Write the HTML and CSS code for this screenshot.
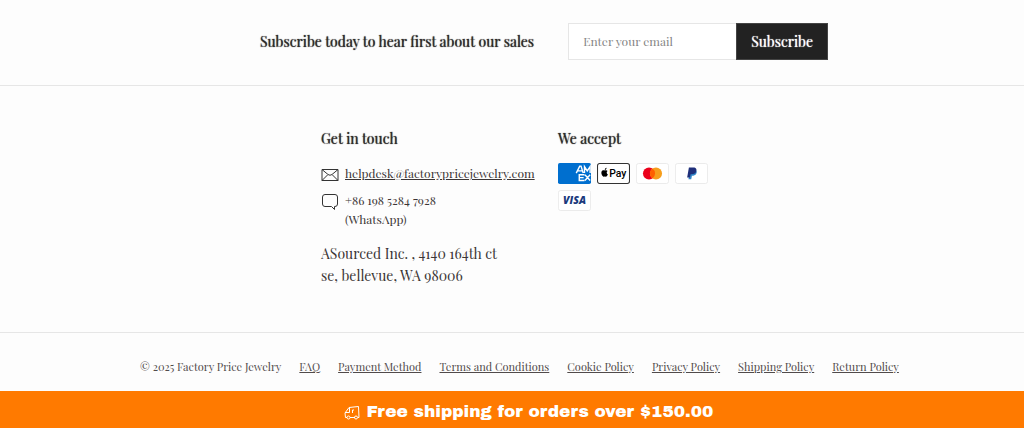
FILE: index.html
```html
<!DOCTYPE html>
<html lang="en">
<head>
  <meta charset="UTF-8">
  <meta name="viewport" content="width=device-width, initial-scale=1.0">
  <title>Factory Price Jewelry</title>
  <link rel="stylesheet" href="styles.css">
</head>
<body>
  <section class="newsletter">
    <h2 class="newsletter-title"><label for="email">Subscribe today to hear first about our sales</label></h2>
    <form class="newsletter-form">
      <input class="newsletter-input" type="email" id="email" placeholder="Enter your email">
      <button class="newsletter-button" type="submit">Subscribe</button>
    </form>
  </section>

  <footer>
    <div class="footer-columns">
      <div class="contact">
        <h3>Get in touch</h3>
        <div class="contact-row">
          <svg class="contact-icon" viewBox="0 0 18 18">
            <path d="M1 3.500h16v11H1zM1 3.500l6 5q2 1.500 4 0l6-5M1 14.500l5.500-5.500M17 14.500l-5.500-5.500"/>
          </svg>
          <a class="email-link" href="mailto:helpdesk@factorypricejewelry.com">helpdesk@factorypricejewelry.com</a>
        </div>
        <div class="contact-row">
          <svg class="contact-icon" viewBox="0 0 18 18">
            <path d="M4 1.500h10q2.500 0 2.500 2.500v7q0 2.500-2.500 2.500h-.5v3l-3-3H4q-2.500 0-2.500-2.500V4Q1.500 1.500 4 1.500z"/>
          </svg>
          <span>+86 198 5284 7928<br>(WhatsApp)</span>
        </div>
        <p class="address">ASourced Inc. , 4140 164th ct<br>se, bellevue, WA 98006</p>
      </div>

      <div class="payments">
        <h3>We accept</h3>
        <div class="cards">
          <svg class="card" viewBox="0 0 38 24" role="img" aria-label="American Express">
            <rect width="38" height="24" rx="2" fill="#006fcf"/>
            <g fill="none" stroke="#fff" stroke-width="1.600">
              <path d="M21 11.500l4-8h1.500l2.500 8M23 9h5M30.500 11.500V4l3.200 5L37 4v7.500"/>
              <path d="M30.500 13.500H24.500v6.500h6M24.500 16.800h5M31 13.500l6 6.500M37 13.500l-6 6.500"/>
            </g>
          </svg>
          <svg class="card" viewBox="0 0 38 24" role="img" aria-label="Apple Pay">
            <rect x=".6" y=".6" width="36.800" height="22.800" rx="2.500" fill="#fff" stroke="#333" stroke-width="1.200"/>
            <path d="M9.200 8.500c1-.5 2.200-.4 3 .6-1.500 1-1.300 3.200.3 3.900-.6 1.600-1.500 2.900-2.500 2.700-.7-.3-1.200-.3-1.900 0C6.200 16.200 4.500 12 5.200 10.100c.6-1.700 2.100-2.100 4-1.600zM9 8c0-1.400.8-2.300 2-2.500.1 1.400-.8 2.400-2 2.500z"/>
            <text class="apple-text" x="14" y="16">Pay</text>
          </svg>
          <svg class="card" viewBox="0 0 38 24" role="img" aria-label="Mastercard">
            <rect class="card-frame" x=".5" y=".5" width="37" height="23" rx="2.500"/>
            <circle cx="15" cy="12" r="7" fill="#eb001b"/>
            <circle cx="23" cy="12" r="7" fill="#f79e1b"/>
            <path d="M19 6.300a7 7 0 0 1 0 11.400 7 7 0 0 1 0-11.400z" fill="#ff5f00"/>
          </svg>
          <svg class="card" viewBox="0 0 38 24" role="img" aria-label="PayPal">
            <rect class="card-frame" x=".5" y=".5" width="37" height="23" rx="2.500"/>
            <path d="M17.500 8h6c2.500.8 2 6-2.500 6.500h-1.500l-.8 4h-3.200z" fill="#3086c8"/>
            <path d="M16 5h5c3.500 0 4.200 2 3.500 4.500-.7 2.500-2.500 3.500-5.500 3.500h-1l-.8 3.500H14z" fill="#1f2f7a"/>
          </svg>
          <svg class="card" viewBox="0 0 38 24" role="img" aria-label="Visa">
            <rect class="card-frame" x=".5" y=".5" width="37" height="23" rx="2.500"/>
            <text class="visa-text" x="19" y="16" text-anchor="middle">VISA</text>
          </svg>
        </div>
      </div>
    </div>

    <nav class="footer-links">
      <span>© 2025 Factory Price Jewelry</span>
      <a href="#">FAQ</a>
      <a href="#">Payment Method</a>
      <a href="#">Terms and Conditions</a>
      <a href="#">Cookie Policy</a>
      <a href="#">Privacy Policy</a>
      <a href="#">Shipping Policy</a>
      <a href="#">Return Policy</a>
    </nav>
  </footer>

  <div class="shipping-bar">
    <svg class="shipping-icon" viewBox="0 0 16 16">
      <path d="M3 13.500H1.500L1 9l4-5.500 9.500-1 .5 11h-1M6 13.500h5M5.500 4v4.500H1M8.500 9V6H10"/>
      <circle cx="4.500" cy="13.500" r="1.500"/>
      <circle cx="12" cy="13.500" r="1.500"/>
    </svg>
    <span>Free shipping for orders over $150.00</span>
  </div>
</body>
</html>
```

FILE: styles.css
```css
body {
  margin: 0;
  background-color: #fdfdfd;
  color: #3b3535;
  font-family: "Playfair Display", "Liberation Serif", serif;
  font-size: 12px;
  line-height: 19px;
}

h2, h3 {
  margin: 0;
  color: #2d2a2a;
  font-size: 14px;
  font-weight: 400;
  line-height: 20px;
  text-shadow: 0 0 1px #2d2a2a;
}

a {
  color: inherit;
}

.newsletter {
  display: flex;
  justify-content: center;
  align-items: center;
  gap: 34px;
  padding: 23px 0 25px 64px;
  border-bottom: 1px solid #e6e6e6;
}

.newsletter-form {
  display: flex;
}

.newsletter-input {
  box-sizing: border-box;
  width: 168px;
  height: 37px;
  padding: 0 14px 2px;
  border: 1px solid #e6e6e6;
  border-right: none;
  border-radius: 0;
  background: white;
  font-family: inherit;
  font-size: 12px;
}

.newsletter-input::placeholder {
  color: #858585;
}

.newsletter-button {
  padding: 0 14px;
  border: 1px solid #444;
  background-color: #222;
  color: white;
  font-family: inherit;
  font-size: 14px;
  text-shadow: 0 0 1px white;
  cursor: pointer;
}

.footer-columns {
  display: grid;
  grid-template-columns: 213px 213px;
  justify-content: center;
  gap: 24px;
  padding: 43px 0 45px 68px;
}

.contact-row {
  display: flex;
  gap: 6px;
  margin-top: 7px;
}

h3 + .contact-row {
  margin-top: 15px;
}

.contact-icon {
  flex: none;
  width: 18px;
  height: 18px;
  margin-top: 2px;
  fill: none;
  stroke: #333;
  stroke-width: 1;
}

.address {
  margin: 14px 0 0;
  font-size: 14px;
  line-height: 22px;
}

.cards {
  display: flex;
  flex-wrap: wrap;
  gap: 6px;
  width: 160px;
  margin-top: 14px;
}

.card {
  width: 33px;
  height: 21px;
}

.card-frame {
  fill: white;
  stroke: #e8e8e8;
}

.apple-text {
  font-family: Roboto, sans-serif;
  font-size: 12px;
  font-weight: 500;
}

.visa-text {
  fill: #1a3a7c;
  font-family: "Open Sans", sans-serif;
  font-size: 12px;
  font-style: italic;
  font-weight: 800;
}

.footer-links {
  display: flex;
  justify-content: center;
  gap: 18px;
  padding: 24px 0 15px 15px;
  border-top: 1px solid #e6e6e6;
  color: #514b4b;
  font-size: 11px;
}

.shipping-bar {
  display: flex;
  justify-content: center;
  align-items: center;
  gap: 7px;
  padding: 9px 0 8px 33px;
  background-color: #ff7a00;
  color: white;
  font-family: "Archivo Black", Inter, sans-serif;
  font-size: 17px;
  font-weight: 400;
  line-height: 24px;
}

.shipping-icon {
  width: 16px;
  height: 16px;
  fill: none;
  stroke: white;
  stroke-width: 1;
}
```
